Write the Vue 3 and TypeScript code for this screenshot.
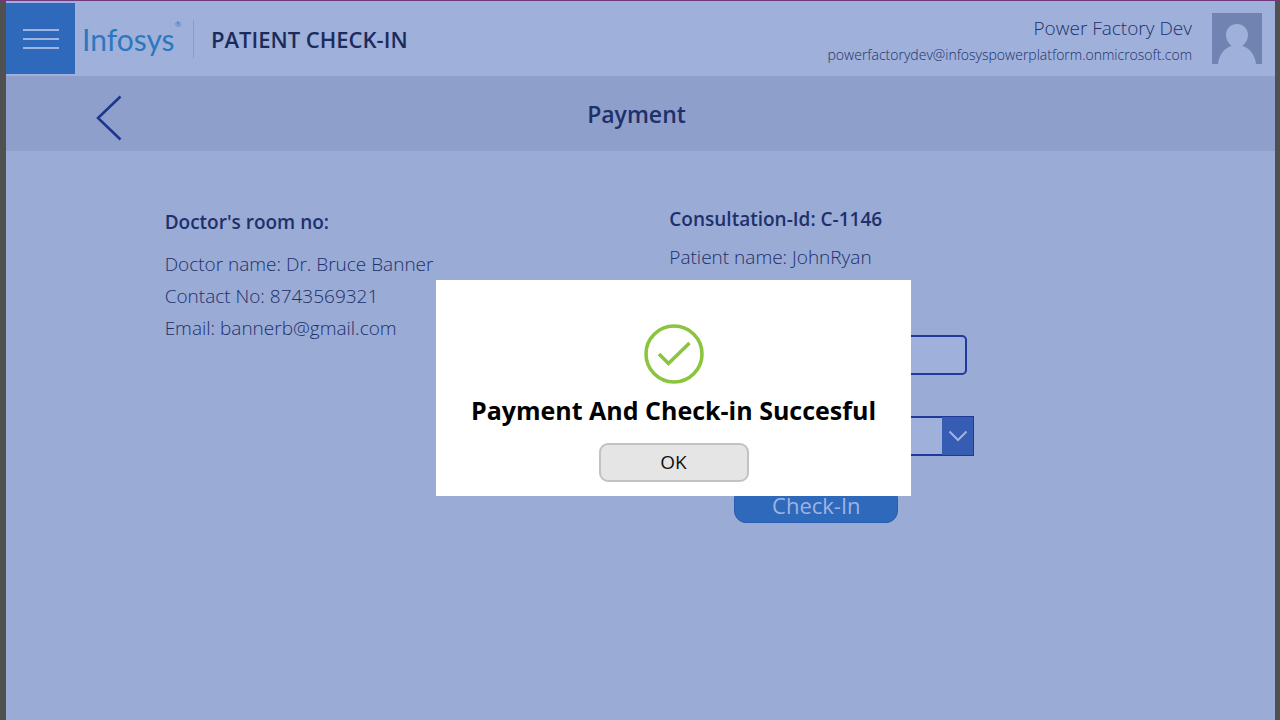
<script setup lang="ts">
import { ref } from 'vue'

interface Line {
  label: string
  value: string
}

const doctorLines: Line[] = [
  { label: 'Doctor name', value: 'Dr. Bruce Banner' },
  { label: 'Contact No', value: '8743569321' },
  { label: 'Email', value: 'bannerb@gmail.com' },
]

const amount = ref('')
const mode = ref('')
const dialogOpen = ref(true)
</script>

<template>
  <div class="frame">
    <div class="app">
      <header class="topbar">
        <button class="menu" type="button" aria-label="Menu">
          <svg width="36" height="22" viewBox="0 0 36 22">
            <path d="M0 2H36M0 11H36M0 20H36" stroke="#9fb4e0" stroke-width="2" fill="none" />
          </svg>
        </button>
        <div class="logo">Infosys<sup>®</sup></div>
        <h1 class="app-title">PATIENT CHECK-IN</h1>
        <div class="user">
          <div class="user-name">Power Factory Dev</div>
          <div class="user-mail">powerfactorydev@infosyspowerplatform.onmicrosoft.com</div>
        </div>
        <svg class="avatar" width="50" height="51" viewBox="0 0 50 51">
          <rect width="50" height="51" fill="#7183b0" />
          <path
            d="M6 51C7 42 12 35 19.500 33C16 30 14 26 14 22C14 15.500 19 11 25 11S36 15.500 36 22C36 26 34 30 30.500 33C38 35 43 42 44 51Z"
            fill="#9fb0db"
          />
        </svg>
      </header>

      <div class="subbar">
        <button class="back" type="button" aria-label="Back">
          <svg width="26" height="46" viewBox="0 0 26 46">
            <path d="M24.500 1.500L2 23L24.500 44.500" stroke="#1d3490" stroke-width="2.500" fill="none" />
          </svg>
        </button>
        <h2 class="page-title">Payment</h2>
      </div>

      <main class="content">
        <section class="doctor">
          <h3>Doctor's room no:</h3>
          <p v-for="line in doctorLines" :key="line.label">{{ line.label }}: {{ line.value }}</p>
        </section>
        <section class="patient">
          <h3>Consultation-Id: C-1146</h3>
          <p>Patient name: JohnRyan</p>
          <form class="form" @submit.prevent="dialogOpen = true">
            <input v-model="amount" class="amount" type="text" aria-label="Amount" />
            <div class="select-wrap">
              <select v-model="mode" aria-label="Payment mode"></select>
              <span class="arrow">
                <svg width="20" height="12" viewBox="0 0 20 12">
                  <path d="M1.500 1.500L10 10L18.500 1.500" stroke="#9fb4e0" stroke-width="2" fill="none" />
                </svg>
              </span>
            </div>
            <button class="checkin" type="submit">Check-In</button>
          </form>
        </section>
      </main>
    </div>

    <div v-if="dialogOpen" class="overlay">
      <div class="dialog" role="dialog" aria-labelledby="dialog-title">
        <svg width="60" height="60" viewBox="0 0 60 60">
          <circle cx="30" cy="30" r="28" stroke="#8bc53f" stroke-width="3.600" fill="none" />
          <path d="M15 30L24.500 39.500L45.500 19" stroke="#8bc53f" stroke-width="3.600" fill="none" />
        </svg>
        <h2 id="dialog-title">Payment And Check-in Succesful</h2>
        <button class="ok" type="button" @click="dialogOpen = false">OK</button>
      </div>
    </div>
  </div>
</template>

<style>
body {
  margin: 0;
}
</style>

<style scoped>
.frame,
.frame * {
  box-sizing: border-box;
}
.frame {
  position: relative;
  min-height: 100vh;
  padding: 0 5px 0 6px;
  border-top: 1px solid #70397f;
  background: #505050;
  font-family: 'Open Sans', 'Noto Sans', sans-serif;
  color: #20306a;
  display: flex;
}
h1,
h2,
h3,
p {
  margin: 0;
}
button,
input,
select {
  font-family: inherit;
  margin: 0;
  padding: 0;
}
.app {
  flex: 1;
  min-width: 0;
  background: #9aabd6;
}
.topbar {
  display: flex;
  align-items: center;
  height: 75px;
  padding-right: 13px;
  background: #9fb0db;
}
.menu {
  width: 69px;
  height: 71px;
  border: 0;
  background: #2f69bb;
  display: grid;
  place-items: center;
}
.logo {
  display: flex;
  align-items: center;
  height: 38px;
  width: 119px;
  padding-left: 7px;
  border-right: 1px solid #8b9ccc;
  font-family: Lato, sans-serif;
  font-size: 30px;
  line-height: 36px;
  color: #2c78bf;
}
.logo sup {
  align-self: flex-start;
  font-size: 8px;
  line-height: 8px;
}
.app-title {
  margin-left: 17px;
  font-size: 22px;
  line-height: 30px;
  font-weight: 600;
  color: #1d2b5c;
}
.user {
  margin-left: auto;
  margin-right: 20px;
  padding-top: 4px;
  text-align: right;
  font-weight: 350;
}
.user-name {
  font-size: 19px;
  line-height: 28px;
}
.user-mail {
  font-size: 14px;
  line-height: 26px;
}
.avatar {
  display: block;
}
.subbar {
  display: grid;
  grid-template-columns: 1fr auto 1fr;
  align-items: center;
  height: 75px;
  background: #8d9fca;
}
.back {
  justify-self: start;
  margin-left: 90px;
  margin-top: 8px;
  border: 0;
  background: none;
}
.back svg,
.dialog svg {
  display: block;
}
.page-title {
  margin-right: 8px;
  font-size: 23px;
  line-height: 32px;
  font-weight: 600;
}
.content {
  display: grid;
  grid-template-columns: 5fr 6fr;
  padding-left: 12.5%;
  font-size: 19px;
  font-weight: 350;
  line-height: 32px;
}
.content h3 {
  font-size: 19px;
  line-height: 32px;
  font-weight: 600;
}
.doctor {
  padding-top: 55px;
}
.doctor h3 {
  margin-bottom: 10px;
}
.patient {
  padding-top: 52px;
}
.patient h3 {
  margin-bottom: 6px;
}
.form {
  display: flex;
  flex-direction: column;
  align-items: flex-start;
  padding-top: 62px;
}
.amount {
  width: 298px;
  height: 40px;
  border: 2px solid #20399b;
  border-radius: 5px;
  background: #9fb0db;
}
.select-wrap {
  position: relative;
  width: 305px;
  height: 40px;
  margin-top: 41px;
}
.select-wrap select {
  appearance: none;
  width: 100%;
  height: 100%;
  border: 2px solid #20399b;
  border-radius: 0;
  background: #9fb0db;
}
.arrow {
  position: absolute;
  top: 1px;
  right: 1px;
  bottom: 1px;
  width: 31px;
  display: grid;
  place-items: center;
  background: #365cb3;
  pointer-events: none;
}
.checkin {
  width: 164px;
  height: 36px;
  margin: 31px 0 0 65px;
  border: 1px solid #285cae;
  border-radius: 12px;
  background: #2f69bb;
  color: #9fb4e0;
  font-size: 22px;
  line-height: 30px;
}
.overlay {
  position: absolute;
  inset: 0;
  display: grid;
  place-items: center;
  padding: 54px 0 0 67px;
}
.dialog {
  display: flex;
  flex-direction: column;
  align-items: center;
  width: 475px;
  padding: 44px 20px 14px;
  background: #fff;
  color: #000;
}
.dialog h2 {
  margin: 10px 0 16px;
  font-size: 25px;
  line-height: 33px;
  font-weight: 700;
  white-space: nowrap;
}
.ok {
  width: 150px;
  height: 39px;
  border: 2px solid #c2c2c2;
  border-radius: 9px;
  background: #e5e5e5;
  color: #111;
  font-size: 19px;
}
</style>
